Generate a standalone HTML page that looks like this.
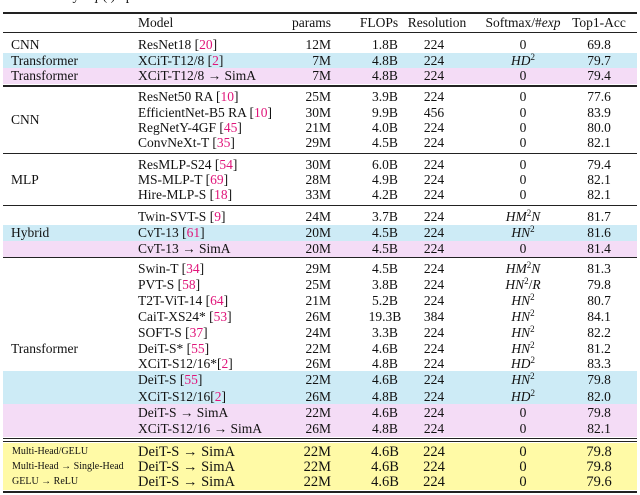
<!DOCTYPE html>
<html><head><meta charset="utf-8"><style>
body{margin:0;width:640px;height:495px;background:#fff;position:relative;overflow:hidden;font-family:"Liberation Serif",serif;font-size:13.5px;color:#111}
.r{position:absolute;left:3px;width:634px;height:16px;line-height:16px}
.r span{position:absolute;top:0;white-space:nowrap}
.r span span, .r span i, .r span sup{position:static}
.g{left:8px}.m{left:135px}
.p{left:280px;width:48px;text-align:right}
.f{left:352px;width:60px;text-align:center}
.s{left:396px;width:70px;text-align:center}
.x{left:464px;width:112px;text-align:center}
.t{left:560px;width:72px;text-align:center}
.c{color:#e0157a}
sup{font-size:9px;line-height:0;vertical-align:5px}
.bg{position:absolute;left:3px;width:634px}
.ln{position:absolute;left:3px;width:634px;background:#222}
.small{font-size:10px}
</style></head><body>
<div style="position:absolute;top:-11px;left:8px;font-size:14px">not need any <i>exp</i>(.) operation at the inference time.</div>
<div class="bg" style="top:53px;height:15px;background:#cdebf6"></div>
<div class="bg" style="top:68px;height:16px;background:#f4dcf6"></div>
<div class="bg" style="top:225px;height:16px;background:#cdebf6"></div>
<div class="bg" style="top:241px;height:16px;background:#f4dcf6"></div>
<div class="bg" style="top:371px;height:33px;background:#cdebf6"></div>
<div class="bg" style="top:404px;height:33px;background:#f4dcf6"></div>
<div class="bg" style="top:443px;height:47px;background:#fffaa6"></div>
<div class="ln" style="top:12px;height:2px"></div>
<div class="ln" style="top:32px;height:1px"></div>
<div class="ln" style="top:85px;height:2px"></div>
<div class="ln" style="top:153px;height:1px"></div>
<div class="ln" style="top:205px;height:1px"></div>
<div class="ln" style="top:257px;height:1px"></div>
<div class="ln" style="top:438px;height:1px"></div>
<div class="ln" style="top:441px;height:1px"></div>
<div class="ln" style="top:491px;height:2px"></div>

<div class="r" style="top:15px"><span class="m">Model</span><span class="p">params</span><span class="f" style="left:346px">FLOPs</span><span class="s" style="left:398px;width:72px">Resolution</span><span class="x">Softmax/#<i>exp</i></span><span class="t">Top1-Acc</span></div>
<div class="r" style="top:37px"><span class="g">CNN</span><span class="m">ResNet18 [<span class="c">20</span>]</span><span class="p">12M</span><span class="f">1.8B</span><span class="s">224</span><span class="x">0</span><span class="t">69.8</span></div>
<div class="r" style="top:53px"><span class="g">Transformer</span><span class="m">XCiT-T12/8 [<span class="c">2</span>]</span><span class="p">7M</span><span class="f">4.8B</span><span class="s">224</span><span class="x"><i>HD</i><sup>2</sup></span><span class="t">79.7</span></div>
<div class="r" style="top:68px"><span class="g">Transformer</span><span class="m">XCiT-T12/8 → SimA</span><span class="p">7M</span><span class="f">4.8B</span><span class="s">224</span><span class="x">0</span><span class="t">79.4</span></div>

<div class="r" style="top:89px"><span class="m">ResNet50 RA [<span class="c">10</span>]</span><span class="p">25M</span><span class="f">3.9B</span><span class="s">224</span><span class="x">0</span><span class="t">77.6</span></div>
<div class="r" style="top:105px"><span class="m">EfficientNet-B5 RA [<span class="c">10</span>]</span><span class="p">30M</span><span class="f">9.9B</span><span class="s">456</span><span class="x">0</span><span class="t">83.9</span></div>
<div class="r" style="top:112px"><span class="g">CNN</span></div>
<div class="r" style="top:120px"><span class="m">RegNetY-4GF [<span class="c">45</span>]</span><span class="p">21M</span><span class="f">4.0B</span><span class="s">224</span><span class="x">0</span><span class="t">80.0</span></div>
<div class="r" style="top:135px"><span class="m">ConvNeXt-T [<span class="c">35</span>]</span><span class="p">29M</span><span class="f">4.5B</span><span class="s">224</span><span class="x">0</span><span class="t">82.1</span></div>

<div class="r" style="top:157px"><span class="m">ResMLP-S24 [<span class="c">54</span>]</span><span class="p">30M</span><span class="f">6.0B</span><span class="s">224</span><span class="x">0</span><span class="t">79.4</span></div>
<div class="r" style="top:172px"><span class="g">MLP</span><span class="m">MS-MLP-T [<span class="c">69</span>]</span><span class="p">28M</span><span class="f">4.9B</span><span class="s">224</span><span class="x">0</span><span class="t">82.1</span></div>
<div class="r" style="top:187px"><span class="m">Hire-MLP-S [<span class="c">18</span>]</span><span class="p">33M</span><span class="f">4.2B</span><span class="s">224</span><span class="x">0</span><span class="t">82.1</span></div>

<div class="r" style="top:209px"><span class="m">Twin-SVT-S [<span class="c">9</span>]</span><span class="p">24M</span><span class="f">3.7B</span><span class="s">224</span><span class="x"><i>HM</i><sup>2</sup><i>N</i></span><span class="t">81.7</span></div>
<div class="r" style="top:225px"><span class="g">Hybrid</span><span class="m">CvT-13 [<span class="c">61</span>]</span><span class="p">20M</span><span class="f">4.5B</span><span class="s">224</span><span class="x"><i>HN</i><sup>2</sup></span><span class="t">81.6</span></div>
<div class="r" style="top:241px"><span class="m">CvT-13 → SimA</span><span class="p">20M</span><span class="f">4.5B</span><span class="s">224</span><span class="x">0</span><span class="t">81.4</span></div>

<div class="r" style="top:261px"><span class="m">Swin-T [<span class="c">34</span>]</span><span class="p">29M</span><span class="f">4.5B</span><span class="s">224</span><span class="x"><i>HM</i><sup>2</sup><i>N</i></span><span class="t">81.3</span></div>
<div class="r" style="top:277px"><span class="m">PVT-S [<span class="c">58</span>]</span><span class="p">25M</span><span class="f">3.8B</span><span class="s">224</span><span class="x"><i>HN</i><sup>2</sup>/<i>R</i></span><span class="t">79.8</span></div>
<div class="r" style="top:293px"><span class="m">T2T-ViT-14 [<span class="c">64</span>]</span><span class="p">21M</span><span class="f">5.2B</span><span class="s">224</span><span class="x"><i>HN</i><sup>2</sup></span><span class="t">80.7</span></div>
<div class="r" style="top:309px"><span class="m">CaiT-XS24* [<span class="c">53</span>]</span><span class="p">26M</span><span class="f">19.3B</span><span class="s">384</span><span class="x"><i>HN</i><sup>2</sup></span><span class="t">84.1</span></div>
<div class="r" style="top:325px"><span class="m">SOFT-S [<span class="c">37</span>]</span><span class="p">24M</span><span class="f">3.3B</span><span class="s">224</span><span class="x"><i>HN</i><sup>2</sup></span><span class="t">82.2</span></div>
<div class="r" style="top:341px"><span class="g">Transformer</span><span class="m">DeiT-S* [<span class="c">55</span>]</span><span class="p">22M</span><span class="f">4.6B</span><span class="s">224</span><span class="x"><i>HN</i><sup>2</sup></span><span class="t">81.2</span></div>
<div class="r" style="top:356px"><span class="m">XCiT-S12/16*[<span class="c">2</span>]</span><span class="p">26M</span><span class="f">4.8B</span><span class="s">224</span><span class="x"><i>HD</i><sup>2</sup></span><span class="t">83.3</span></div>
<div class="r" style="top:372px"><span class="m">DeiT-S [<span class="c">55</span>]</span><span class="p">22M</span><span class="f">4.6B</span><span class="s">224</span><span class="x"><i>HN</i><sup>2</sup></span><span class="t">79.8</span></div>
<div class="r" style="top:389px"><span class="m">XCiT-S12/16[<span class="c">2</span>]</span><span class="p">26M</span><span class="f">4.8B</span><span class="s">224</span><span class="x"><i>HD</i><sup>2</sup></span><span class="t">82.0</span></div>
<div class="r" style="top:405px"><span class="m">DeiT-S → SimA</span><span class="p">22M</span><span class="f">4.6B</span><span class="s">224</span><span class="x">0</span><span class="t">79.8</span></div>
<div class="r" style="top:421px"><span class="m">XCiT-S12/16 → SimA</span><span class="p">26M</span><span class="f">4.8B</span><span class="s">224</span><span class="x">0</span><span class="t">82.1</span></div>

<div class="r" style="top:444px;font-size:14.5px"><span class="g small" style="left:9px">Multi-Head/GELU</span><span class="m">DeiT-S → SimA</span><span class="p">22M</span><span class="f">4.6B</span><span class="s">224</span><span class="x">0</span><span class="t">79.8</span></div>
<div class="r" style="top:459px;font-size:14.5px"><span class="g small" style="left:9px">Multi-Head → Single-Head</span><span class="m">DeiT-S → SimA</span><span class="p">22M</span><span class="f">4.6B</span><span class="s">224</span><span class="x">0</span><span class="t">79.8</span></div>
<div class="r" style="top:474px;font-size:14.5px"><span class="g small" style="left:9px">GELU → ReLU</span><span class="m">DeiT-S → SimA</span><span class="p">22M</span><span class="f">4.6B</span><span class="s">224</span><span class="x">0</span><span class="t">79.6</span></div>
</body></html>
